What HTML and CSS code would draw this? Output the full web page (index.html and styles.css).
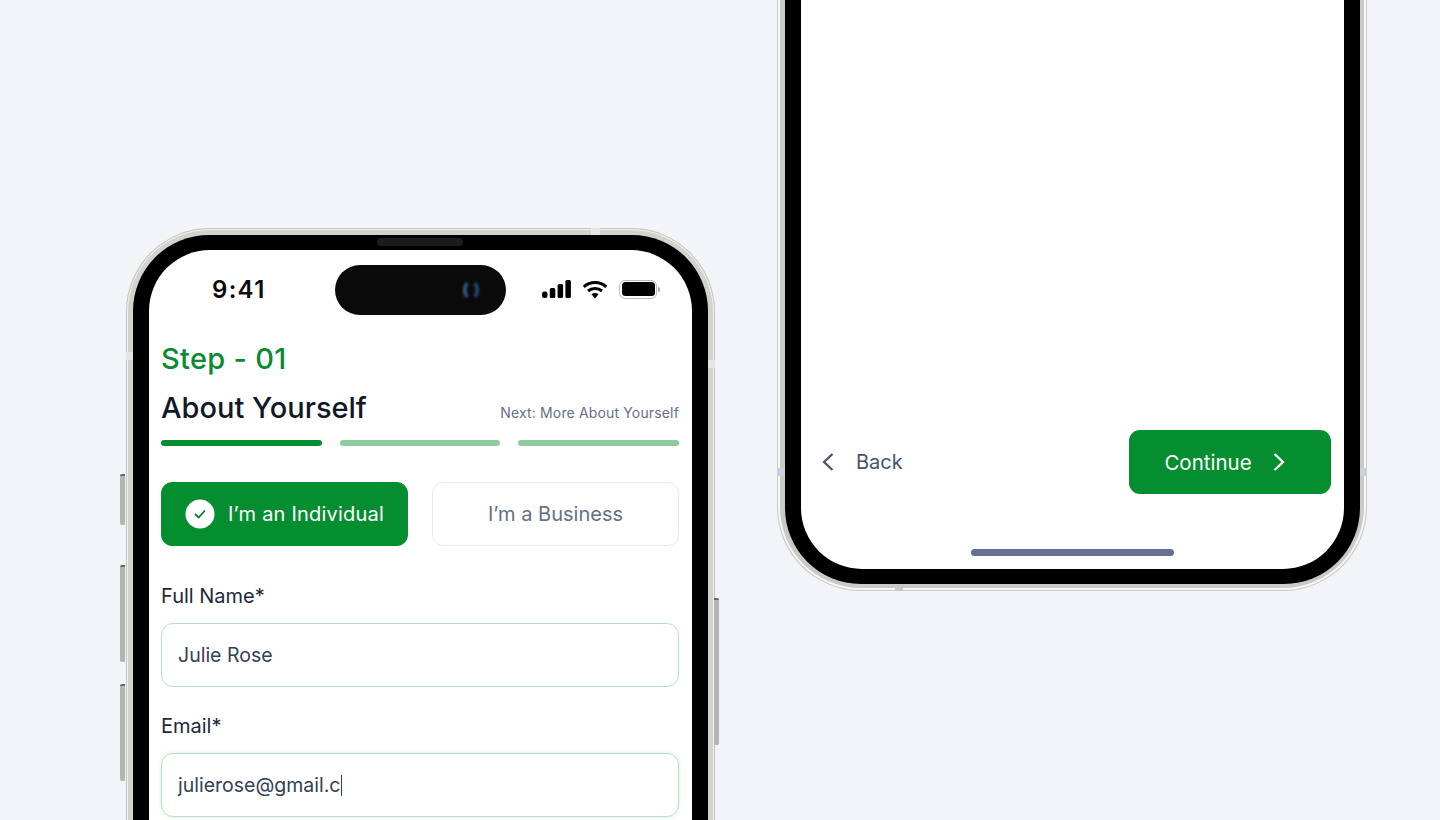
FILE: index.html
```html
<!DOCTYPE html>
<html lang="en">
<head>
<meta charset="utf-8">
<title>Onboarding</title>
<link rel="stylesheet" href="styles.css">
</head>
<body>
<main class="canvas">
  <section class="phone phone-left">
    <span class="side-btn btn-a"></span>
    <span class="side-btn btn-b"></span>
    <span class="side-btn btn-c"></span>
    <span class="side-btn btn-d"></span>
    <span class="band band-l"></span>
    <span class="band band-r"></span>
    <span class="band band-t"></span>
    <div class="bezel">
      <span class="speaker"></span>
      <div class="screen">
        <div class="island">
          <svg class="lens" viewBox="0 0 20 20" width="20" height="20" aria-hidden="true">
            <path d="M6 3C3 7.500 3 12.500 6 17" fill="none" stroke="#2f5684" stroke-width="3.800"/>
            <path d="M14 3C17 7.500 17 12.500 14 17" fill="none" stroke="#25466a" stroke-width="3.800"/>
          </svg>
        </div>
        <header class="status">
          <span class="time">9:41</span>
          <div class="status-icons">
            <svg width="29" height="18" viewBox="0 0 29 18" aria-hidden="true">
              <rect x="0" y="11.500" width="5.500" height="6.500" rx="2.200"/>
              <rect x="7.800" y="8" width="5.500" height="10" rx="1.500"/>
              <rect x="15.600" y="4" width="5.500" height="14" rx="1.500"/>
              <rect x="23.400" y="0" width="5.500" height="18" rx="1.500"/>
            </svg>
            <svg width="26" height="19" viewBox="0 0 26 19" aria-hidden="true">
              <path d="M1.800 6.800C8 1.200 18 1.200 24.200 6.800" fill="none" stroke="#000" stroke-width="3"/>
              <path d="M6 11C10 7.600 16 7.600 20 11" fill="none" stroke="#000" stroke-width="3"/>
              <path d="M9.500 14.300L13 18.500L16.500 14.300C14.500 12.700 11.500 12.700 9.500 14.300Z"/>
            </svg>
            <div class="battery"><span class="battery-fill"></span></div>
            <span class="battery-nub"></span>
          </div>
        </header>
        <div class="form">
          <p class="step">Step - 01</p>
          <div class="title-row">
            <h1 class="title">About Yourself</h1>
            <span class="next">Next: More About Yourself</span>
          </div>
          <div class="progress">
            <span class="bar bar-on"></span>
            <span class="bar"></span>
            <span class="bar"></span>
          </div>
          <div class="choices">
            <div class="choice choice-on">
              <svg class="tick" width="30" height="30" viewBox="0 0 30 30" aria-hidden="true">
                <circle cx="15" cy="15" r="14.500" fill="#fff"/>
                <path d="M10.500 15.300L13.700 18.500L19.500 12" fill="none" stroke="#0b7a2e" stroke-width="1.800" stroke-linecap="round" stroke-linejoin="round"/>
              </svg>
              <span>I’m an Individual</span>
            </div>
            <div class="choice">I’m a Business</div>
          </div>
          <label class="label label-first">Full Name*</label>
          <div class="input">Julie Rose</div>
          <label class="label">Email*</label>
          <div class="input input-focus">julierose@gmail.c<span class="caret"></span></div>
        </div>
      </div>
    </div>
  </section>

  <section class="phone phone-right">
    <span class="band band-rl"></span>
    <span class="band band-rr"></span>
    <span class="band band-b"></span>
    <div class="bezel">
      <div class="screen screen-bottom">
        <div class="nav">
          <div class="back">
            <svg width="14" height="20" viewBox="0 0 14 20" aria-hidden="true">
              <path d="M11.500 2L3 10L11.500 18" fill="none" stroke="#475467" stroke-width="2.200"/>
            </svg>
            <span>Back</span>
          </div>
          <div class="continue">
            <span>Continue</span>
            <svg width="14" height="20" viewBox="0 0 14 20" aria-hidden="true">
              <path d="M2.500 2L11 10L2.500 18" fill="none" stroke="#fff" stroke-width="2.400"/>
            </svg>
          </div>
        </div>
        <span class="home"></span>
      </div>
    </div>
  </section>
</main>
</body>
</html>
```

FILE: styles.css
```css
* { box-sizing: border-box; }
html, body { margin: 0; height: 100%; }
body {
  background: #f2f4f7;
  font-family: "Inter", "Liberation Sans", sans-serif;
  overflow: hidden;
}
.canvas { position: relative; width: 1440px; height: 820px; overflow: hidden; }

.phone {
  position: absolute;
  padding: 7px;
  border-radius: 84px;
}
.phone-left {
  left: 126px; top: 228px;
  width: 589px; height: 800px;
  background: #d3d3ce;
  box-shadow: inset 0 0 0 1px #c4c4bf, inset 0 0 0 2px #f1f1ee;
}
.phone-right {
  left: 777px; top: -210px;
  width: 590px; height: 801px;
  padding: 7px 7px 7px 8px;
  background: #c9c9c7;
  box-shadow: inset 0 0 0 1px #c9c9c7, inset 0 0 0 3px #f6f6f5;
}

.bezel {
  position: relative;
  height: 100%;
  background: #000;
  border-radius: 76px;
  padding: 15px 16px;
}
.screen {
  position: relative;
  height: 100%;
  background: #fff;
  border-radius: 61px;
  overflow: hidden;
}
.speaker {
  position: absolute;
  left: 244px; top: 3px;
  width: 86px; height: 8px;
  border-radius: 4px;
  background: #1c1c1c;
}

.side-btn { position: absolute; width: 5px; background: #b4b4b0; border-radius: 2px 0 0 2px; border-top: 2px solid #666; }
.btn-a { left: -6px; top: 246px; height: 51px; }
.btn-b { left: -6px; top: 337px; height: 97px; }
.btn-c { left: -6px; top: 456px; height: 97px; }
.btn-d { right: -4px; top: 370px; height: 147px; border-radius: 0 2px 2px 0; }

.band { position: absolute; background: #e4e5e7; }
.band-l { left: 0; top: 124px; width: 7px; height: 8px; }
.band-r { right: 0; top: 132px; width: 7px; height: 8px; }
.band-t { left: 465px; top: 0; width: 9px; height: 7px; }
.band-rl { left: 0; top: 678px; width: 8px; height: 8px; background: #cdd0d5; }
.band-rr { right: 0; top: 678px; width: 7px; height: 8px; background: #cdd0d5; }
.band-b { left: 118px; bottom: 0; width: 8px; height: 8px; background: #c6c8cb; }

.island {
  position: absolute;
  left: 186px; top: 15px;
  width: 171px; height: 50px;
  border-radius: 25px;
  background: #0a0a0a;
}
.lens { position: absolute; right: 25px; top: 15px; filter: blur(0.8px); }

.status {
  display: flex;
  justify-content: space-between;
  align-items: center;
  height: 78px;
  padding: 0 35px 0 63px;
}
.time {
  font-size: 24px;
  font-weight: 600;
  letter-spacing: 1.300px;
  color: #0b0b0b;
}
.status-icons { display: flex; align-items: center; gap: 11px; position: relative; }
.battery {
  width: 38px; height: 19px;
  border: 1.500px solid #b9b9b9;
  border-radius: 6px;
  padding: 1.500px;
}
.battery-fill { display: block; height: 100%; background: #000; border-radius: 3.500px; }
.battery-nub {
  position: absolute; right: -3px; top: 7px;
  width: 2px; height: 5px;
  background: #a9a9a9;
  border-radius: 0 2px 2px 0;
}

.form { padding: 0 13px 0 12px; }
.step { margin: 12px 0 0; font-size: 29px; line-height: 38px; font-weight: 500; letter-spacing: 0.300px; color: #0a8a32; }
.title-row { display: flex; justify-content: space-between; align-items: baseline; margin-top: 11px; }
.title { margin: 0; font-size: 29px; line-height: 38px; font-weight: 500; letter-spacing: 0; color: #101828; }
.next { font-size: 14px; letter-spacing: 0.150px; color: #667085; }
.progress { display: flex; gap: 18px; margin-top: 13px; }
.bar { flex: 1; height: 6px; border-radius: 3px; background: #8fcb9f; }
.bar-on { background: #058e30; }

.choices { display: flex; gap: 24px; margin-top: 36px; }
.choice {
  flex: 1;
  height: 64px;
  display: flex;
  align-items: center;
  justify-content: center;
  gap: 13px;
  border: 1px solid #e8eaee;
  border-radius: 11px;
  font-size: 20px;
  color: #667085;
}
.choice-on { background: #058e30; border-color: #058e30; color: #fff; letter-spacing: 0.200px; }
.tick { flex: none; }

.label { display: block; margin: 26px 0 14px; font-size: 20px; line-height: 26px; color: #1d2939; }
.label-first { margin-top: 37px; }
.input {
  height: 64px;
  display: flex;
  align-items: center;
  padding: 0 16px;
  border: 1.500px solid #b9dec4;
  border-radius: 12px;
  font-size: 19.500px;
  color: #344054;
}
.input-focus { box-shadow: 0 0 4px #d5efdc; }
.caret { display: inline-block; width: 1px; height: 21px; margin-left: 1px; background: #344054; }

.screen-bottom { display: flex; flex-direction: column; justify-content: flex-end; padding: 0 13px 13px 20px; }
.nav { display: flex; justify-content: space-between; align-items: center; margin-bottom: 55px; }
.back { display: flex; align-items: center; gap: 21px; font-size: 20px; color: #475467; }
.continue {
  width: 202px; height: 64px;
  display: flex;
  align-items: center;
  justify-content: center;
  gap: 20px;
  padding-right: 10px;
  background: #058e30;
  border-radius: 11px;
  font-size: 20.500px;
  color: #fff;
}
.home {
  align-self: center;
  width: 203px; height: 7px;
  border-radius: 4px;
  background: #667091;
  position: relative;
  left: -3.500px;
}
```
